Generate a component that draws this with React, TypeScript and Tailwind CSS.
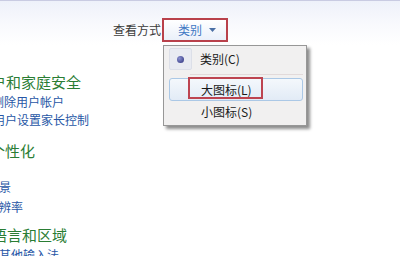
import React from "react";

const cjk = { fontFamily: '"Noto Sans CJK SC", "Noto Sans", sans-serif' };

function Heading({ text, ml, mt }: { text: string; ml: string; mt: string }) {
  return (
    <div className={`h-[20px] leading-[20px] text-[15px] text-[#2a7d34] whitespace-nowrap ${ml} ${mt}`}>{text}</div>
  );
}

export default function App() {
  return (
    <div
      className="relative w-[400px] h-[256px] overflow-hidden bg-white"
      style={cjk}
    >
      {/* top band */}
      <div className="h-[1px] bg-[#c9cbe2]" />
      <div className="h-[44px] bg-gradient-to-b from-[#eef1fa] via-[#f8f9fd] to-white flex items-start">
        <div className="ml-[113px] mt-[16px] flex items-center">
          <span className="text-[12px] text-[#3a3a3a] leading-[26px]">查看方式</span>
          <div className="ml-[1px] w-[66px] h-[24px] border-2 border-[#b9414b] bg-gradient-to-b from-white to-[#eaf0fa] flex items-center">
            <span className="ml-[14px] text-[12px] text-[#3f78c4] leading-[20px]">类别</span>
            <svg className="ml-[7px]" width="7" height="4" viewBox="0 0 7 4">
              <path d="M0 0 L7 0 L3.5 4 Z" fill="#4a6fa5" />
            </svg>
          </div>
        </div>
      </div>

      {/* left content */}
      <div className="flex flex-col">
        <Heading text="用户帐户和家庭安全" ml="ml-[-54px]" mt="mt-[27px]" />
        <div className="h-[20px] leading-[20px] text-[12px] text-[#2757a6] whitespace-nowrap ml-[-44px]">添加或删除用户帐户</div>
        <div className="h-[20px] leading-[20px] text-[12px] text-[#2757a6] whitespace-nowrap ml-[-19px] mt-[-2px]">为用户设置家长控制</div>
        <Heading text="外观和个性化" ml="ml-[-55px]" mt="mt-[11px]" />
        <div className="h-[16px] leading-[16px] text-[12px] text-[#2757a6] whitespace-nowrap ml-[-61px]">更改主题</div>
        <div className="h-[20px] leading-[20px] text-[12px] text-[#2757a6] whitespace-nowrap ml-[-61px]">更改桌面背景</div>
        <div className="h-[20px] leading-[20px] text-[12px] text-[#2757a6] whitespace-nowrap ml-[-61px]">调整屏幕分辨率</div>
        <Heading text="时钟、语言和区域" ml="ml-[-53px]" mt="mt-[8px]" />
        <div className="h-[20px] leading-[20px] text-[12px] text-[#2757a6] whitespace-nowrap ml-[-61px]">更改键盘或其他输入法</div>
      </div>

      {/* dropdown menu */}
      <div className="absolute left-[163px] top-[45px] w-[144px] h-[81px] bg-[#f1f0f0] border border-[#979797] shadow-[3px_3px_3px_rgba(0,0,0,0.45)] flex flex-col">
        <div className="h-[24px] mt-[1px] flex items-center">
          <div className="ml-[5px] w-[23px] h-[22px] border border-[#dcdfe8] bg-[#e9ebf2] rounded-[2px] flex items-center justify-center">
            <div className="w-[7px] h-[7px] rounded-full bg-[radial-gradient(circle_at_35%_35%,#8a90d0,#2b2f7a)]" />
          </div>
          <span className="ml-[8px] text-[12px] text-[#1a1a1a] leading-[20px]">类别(C)</span>
        </div>
        <div className="mt-[3px] ml-[26px] mr-[3px] h-[1px] bg-[#e2dada]" />
        <div className="mt-[3px] ml-[5px] mr-[3px] h-[23px] rounded-[3px] border border-[#abc8e6] bg-gradient-to-b from-[#f4f8fc] to-[#e2ebf6] relative flex items-center">
          <div className="absolute left-[18px] top-[-2px] w-[75px] h-[22px] border-2 border-[#bd4450]" />
          <span className="ml-[31px] text-[12px] text-[#1a1a1a] leading-[20px]">大图标(L)</span>
        </div>
        <div className="h-[21px] flex items-center">
          <span className="ml-[37px] text-[12px] text-[#1a1a1a] leading-[20px]">小图标(S)</span>
        </div>
      </div>
    </div>
  );
}
